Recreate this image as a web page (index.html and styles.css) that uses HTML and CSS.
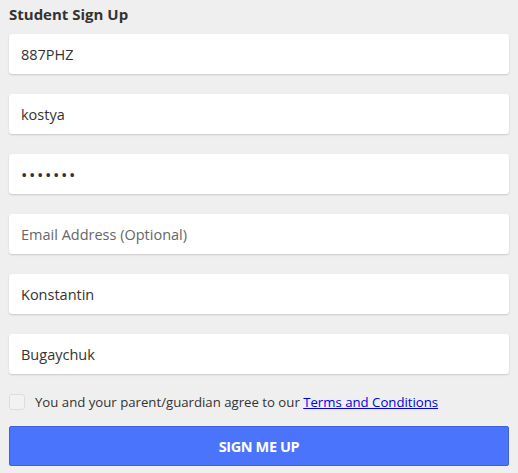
FILE: index.html
```html
<!DOCTYPE html>
<html>
<head>
<meta charset="utf-8">
<link rel="stylesheet" href="styles.css">
</head>
<body>
<form class="signup">
  <h1 class="title">Student Sign Up</h1>
  <div class="fields">
    <input class="field" type="text" value="887PHZ">
    <input class="field" type="text" value="kostya">
    <input class="field pw" type="password" value="1234567">
    <input class="field" type="text" placeholder="Email Address (Optional)">
    <input class="field" type="text" value="Konstantin">
    <input class="field" type="text" value="Bugaychuk">
  </div>
  <label class="agree">
    <span class="box"></span>
    <span class="agree-text">You and your parent/guardian agree to our <a href="#" class="terms">Terms and Conditions</a></span>
  </label>
  <button class="submit" type="button">SIGN ME UP</button>
</form>
</body>
</html>
```
FILE: styles.css
```css
html, body {
  margin: 0;
  padding: 0;
  background: #efefef;
}
body {
  font-family: "Open Sans", "Noto Sans", sans-serif;
  color: #333;
}
.signup {
  width: 500px;
  padding: 4px 9px 0 9px;
  display: flex;
  flex-direction: column;
}
.title {
  margin: 0;
  font-size: 15px;
  font-weight: 700;
  color: #333;
  line-height: 20px;
  height: 20px;
}
.fields {
  margin-top: 10px;
  display: flex;
  flex-direction: column;
  gap: 20px;
}
.field {
  box-sizing: border-box;
  width: 500px;
  height: 40px;
  border: none;
  border-radius: 3px;
  background: #fff;
  box-shadow: 0 1px 2px rgba(0,0,0,0.16);
  padding: 0 12px;
  font-family: "Open Sans", "Noto Sans", sans-serif;
  font-size: 14.5px;
  color: #333;
  outline: none;
}
.field::placeholder {
  color: #666;
  opacity: 1;
}
.pw {
  font-size: 17px;
  letter-spacing: 1.6px;
}
.agree {
  margin-top: 20px;
  display: flex;
  align-items: center;
  gap: 10px;
  height: 16px;
}
.box {
  box-sizing: border-box;
  width: 16px;
  height: 16px;
  border: 1px solid #ddd;
  border-radius: 3px;
  background: #f2f2f2;
}
.agree-text {
  font-size: 13.2px;
  color: #333;
}
.terms {
  color: #0000ee;
  text-decoration: underline;
}
.submit {
  margin-top: 16px;
  width: 500px;
  height: 40px;
  box-sizing: border-box;
  border: 1px solid #3f63d6;
  border-radius: 2px;
  background: #4a74fb;
  color: #fff;
  font-family: "Open Sans", "Noto Sans", sans-serif;
  font-weight: 700;
  font-size: 14.5px;
  letter-spacing: -0.4px;
}
```
